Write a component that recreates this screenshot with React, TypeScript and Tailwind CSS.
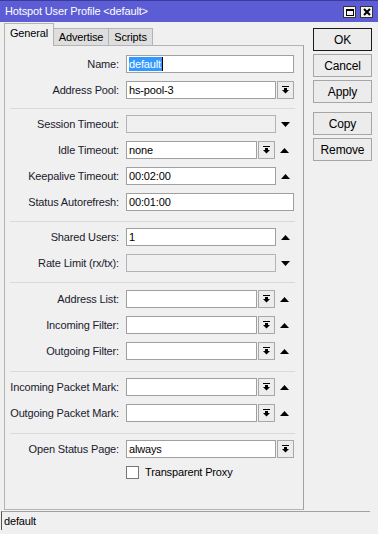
import React from 'react';

function DropBtn() {
  return (
    <div className="ml-[1px] w-[17px] h-[18px] border border-[#a8a8a8] bg-[#ededed] flex items-center justify-center">
      <svg width="7" height="8" viewBox="0 0 7 8">
        <rect x="0" y="0" width="7" height="1" fill="#000" />
        <rect x="2" y="2" width="3" height="2" fill="#000" />
        <polygon points="0,4 7,4 3.5,7.5" fill="#000" />
      </svg>
    </div>
  );
}

function Arrow({ up }: { up?: boolean }) {
  return (
    <div className="w-[18px] h-[18px] flex items-center justify-center">
      <svg width="9" height="5" viewBox="0 0 9 5">
        {up ? <polygon points="4.5,0 9,5 0,5" fill="#000" /> : <polygon points="0,0 9,0 4.5,5" fill="#000" />}
      </svg>
    </div>
  );
}

function Field({ w, value = '', disabled, selected }: { w: string; value?: string; disabled?: boolean; selected?: boolean }) {
  return (
    <div
      className={`${w} h-[18px] border flex items-center pl-[2px] leading-none ${
        disabled ? 'bg-[#f0f0f0] border-[#b4b4b4]' : 'bg-white border-[#a0a0a0]'
      }`}
    >
      {selected ? (
        <span className="bg-[#3399ff] text-white h-[14px] flex items-center pr-[1px] border-r border-black">{value}</span>
      ) : (
        <span>{value}</span>
      )}
    </div>
  );
}

function Row({ label, children }: { label: string; children: React.ReactNode }) {
  return (
    <div className="flex items-center h-[18px]">
      <div className="w-[114px] text-right whitespace-nowrap text-[#1a1a2e]">{label}:</div>
      <div className="ml-[7px] flex items-center">{children}</div>
    </div>
  );
}

function Sep({ className }: { className: string }) {
  return <div className={`ml-[5px] w-[285px] h-px bg-[#d9d9d9] ${className}`} />;
}

function Btn({ label, primary, className = '' }: { label: string; primary?: boolean; className?: string }) {
  return (
    <div
      className={`h-[23px] w-[59px] flex items-center justify-center text-[12px] bg-[#ececec] border ${
        primary ? 'border-[#1a1a1a]' : 'border-[#a6a6a6]'
      } ${className}`}
    >
      {label}
    </div>
  );
}

export default function App() {
  return (
    <div className="w-[378px] h-[534px] bg-[#f0f0f0] flex flex-col overflow-hidden text-[11px] text-black font-['Liberation_Sans',Arial,sans-serif] tracking-[-0.15px]">
      {/* title bar */}
      <div className="h-[22px] bg-[#5c5cd4] border-t border-[#3a3a9a] flex items-center pl-[5px] pr-[5px] shrink-0">
        <span className="text-white text-[11px]">Hotspot User Profile &lt;default&gt;</span>
        <div className="ml-auto flex gap-[4px] mt-[1px]">
          <div className="w-[13px] h-[12px] bg-[#f4f4f4] border border-[#333] flex items-center justify-center">
            <div className="w-[8px] h-[7px] border border-black border-t-2" />
          </div>
          <div className="w-[13px] h-[12px] bg-[#f4f4f4] border border-[#333] flex items-center justify-center">
            <svg width="8" height="8" viewBox="0 0 8 8">
              <path d="M1 1 L7 7 M7 1 L1 7" stroke="#000" strokeWidth="2" />
            </svg>
          </div>
        </div>
      </div>

      <div className="flex flex-1 min-h-0">
        <div className="ml-[4px] w-[300px] flex flex-col pt-[2px]">
          {/* tabs */}
          <div className="flex items-end h-[22px] relative z-10 -mb-px">
            <div className="h-[23px] w-[50px] bg-[#f0f0f0] border border-b-0 border-[#b4b4b4] flex items-center justify-center pb-[3px]">
              General
            </div>
            <div className="h-[18px] w-[55px] bg-[#dedede] border border-[#b4b4b4] border-l-0 flex items-center justify-center">
              Advertise
            </div>
            <div className="h-[18px] w-[44px] bg-[#dedede] border border-[#b4b4b4] border-l-0 flex items-center justify-center">
              Scripts
            </div>
          </div>

          {/* panel */}
          <div className="flex-1 border border-[#b4b4b4] border-r-[#a0a0a0] pt-[9px] flex flex-col">
            <div className="flex flex-col gap-[8px]">
              <Row label="Name">
                <Field w="w-[168px]" value="default" selected />
              </Row>
              <Row label="Address Pool">
                <Field w="w-[150px]" value="hs-pool-3" />
                <DropBtn />
              </Row>
            </div>
            <Sep className="mt-[9px] mb-[6px]" />
            <div className="flex flex-col gap-[8px]">
              <Row label="Session Timeout">
                <Field w="w-[150px]" disabled />
                <Arrow />
              </Row>
              <Row label="Idle Timeout">
                <Field w="w-[131px]" value="none" />
                <DropBtn />
                <Arrow up />
              </Row>
              <Row label="Keepalive Timeout">
                <Field w="w-[150px]" value="00:02:00" />
                <Arrow up />
              </Row>
              <Row label="Status Autorefresh">
                <Field w="w-[168px]" value="00:01:00" />
              </Row>
            </div>
            <Sep className="mt-[10px] mb-[6px]" />
            <div className="flex flex-col gap-[8px]">
              <Row label="Shared Users">
                <Field w="w-[150px]" value="1" />
                <Arrow up />
              </Row>
              <Row label="Rate Limit (rx/tx)">
                <Field w="w-[150px]" disabled />
                <Arrow />
              </Row>
            </div>
            <Sep className="mt-[10px] mb-[7px]" />
            <div className="flex flex-col gap-[8px]">
              {['Address List', 'Incoming Filter', 'Outgoing Filter'].map((l) => (
                <Row key={l} label={l}>
                  <Field w="w-[131px]" />
                  <DropBtn />
                  <Arrow up />
                </Row>
              ))}
            </div>
            <Sep className="mt-[11px] mb-[6px]" />
            <div className="flex flex-col gap-[8px]">
              {['Incoming Packet Mark', 'Outgoing Packet Mark'].map((l) => (
                <Row key={l} label={l}>
                  <Field w="w-[131px]" />
                  <DropBtn />
                  <Arrow up />
                </Row>
              ))}
            </div>
            <Sep className="mt-[11px] mb-[6px]" />
            <Row label="Open Status Page">
              <Field w="w-[150px]" value="always" />
              <DropBtn />
            </Row>
            <div className="flex items-center mt-[6px] pl-[121px]">
              <div className="w-[13px] h-[13px] bg-white border border-[#777]" />
              <span className="ml-[6px]">Transparent Proxy</span>
            </div>
          </div>
        </div>

        {/* buttons */}
        <div className="ml-[9px] pt-[6px] flex flex-col gap-[3px]">
          <Btn label="OK" primary />
          <Btn label="Cancel" />
          <Btn label="Apply" />
          <Btn label="Copy" className="mt-[6px]" />
          <Btn label="Remove" />
        </div>
      </div>

      {/* status bar */}
      <div className="h-[24px] shrink-0 pt-[1px] pr-[8px]">
        <div className="h-[19px] border-t border-[#a0a0a0] border-l border-l-[#555] ml-[1px] flex items-center pl-[2px]">
          default
        </div>
      </div>
    </div>
  );
}
